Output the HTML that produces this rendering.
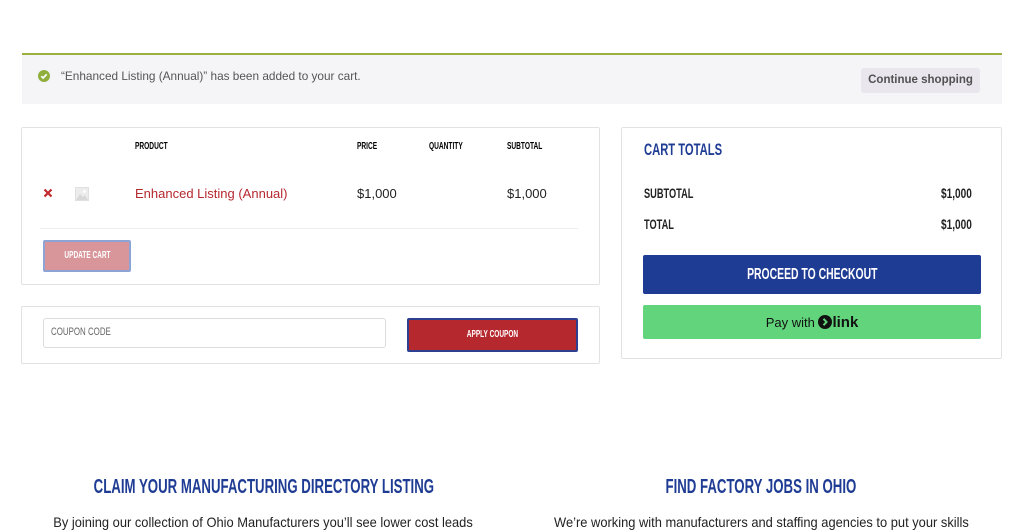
<!DOCTYPE html>
<html><head><meta charset="utf-8"><style>
*{margin:0;padding:0;box-sizing:border-box}
body{width:1024px;height:531px;overflow:hidden;background:#fff;font-family:"Liberation Sans",sans-serif;position:relative}
.a{position:absolute}
.c{display:inline-block;font-weight:bold;transform:scaleX(.66);transform-origin:left center;white-space:nowrap}
.cc{display:inline-block;font-weight:bold;transform:scaleX(.65);transform-origin:center center;white-space:nowrap}
.box{position:absolute;border:1px solid #e2e2e2;border-radius:2px;background:#fff}
</style></head><body>
<div class="a" style="left:22px;top:53px;width:980px;height:51px;background:#f5f5f7;border-top:2px solid #98b13f"></div>
<svg class="a" style="left:38px;top:70px" width="12" height="12" viewBox="0 0 12 12"><circle cx="6" cy="6" r="6" fill="#8fae3b"/><path d="M3.3 6.2l1.8 1.8 3.6-3.7" stroke="#fff" stroke-width="1.7" fill="none"/></svg>
<div class="a" style="left:61px;top:69px;font-size:11.8px;color:#555">“Enhanced Listing (Annual)” has been added to your cart.</div>
<div class="a" style="left:861px;top:68px;width:119px;height:25px;background:#e9e6ed;border-radius:3px;font-size:11.5px;font-weight:bold;color:#515151;text-align:center;line-height:25px">Continue shopping</div>

<div class="box" style="left:21px;top:127px;width:579px;height:158px"></div>
<div class="a" style="left:135px;top:141px;font-size:10px"><span class="c">PRODUCT</span></div>
<div class="a" style="left:357px;top:141px;font-size:10px"><span class="c">PRICE</span></div>
<div class="a" style="left:429px;top:141px;font-size:10px"><span class="c">QUANTITY</span></div>
<div class="a" style="left:507px;top:141px;font-size:10px"><span class="c">SUBTOTAL</span></div>
<svg class="a" style="left:43px;top:188px" width="10" height="10" viewBox="0 0 10 10"><path d="M1.5 1.5l7 7M8.5 1.5l-7 7" stroke="#c0292e" stroke-width="2.2"/></svg>
<div class="a" style="left:75px;top:187px;width:14px;height:14px;background:#ececec;border:1px solid #e0e0e0"></div>
<svg class="a" style="left:76px;top:188px" width="12" height="12" viewBox="0 0 12 12"><circle cx="8.5" cy="3.5" r="1.5" fill="#fff"/><path d="M0 12L4 6l3 3 2-2 3 5z" fill="#d8d8d8"/></svg>
<div class="a" style="left:135px;top:186px;font-size:13px;color:#b5282e">Enhanced Listing (Annual)</div>
<div class="a" style="left:357px;top:186px;font-size:13px;color:#222">$1,000</div>
<div class="a" style="left:507px;top:186px;font-size:13px;color:#222">$1,000</div>
<div class="a" style="left:40px;top:228px;width:538px;height:1px;background:#eee"></div>
<div class="a" style="left:43px;top:240px;width:88px;height:32px;background:#d9969a;border:2px solid #8ea3d6;border-radius:2px;color:#fff;font-size:10px;text-align:center;line-height:28px"><span class="cc">UPDATE CART</span></div>

<div class="box" style="left:21px;top:306px;width:579px;height:58px"></div>
<div class="a" style="left:43px;top:318px;width:343px;height:30px;border:1px solid #ddd;border-radius:3px"></div>
<div class="a" style="left:51px;top:326px;font-size:11px;color:#666"><span class="c" style="font-weight:normal;transform:scaleX(.72)">COUPON CODE</span></div>
<div class="a" style="left:407px;top:318px;width:171px;height:34px;background:#b5282e;border:2px solid #2f3f8f;border-radius:2px;color:#fff;font-size:10px;text-align:center;line-height:30px"><span class="cc">APPLY COUPON</span></div>

<div class="box" style="left:621px;top:127px;width:381px;height:232px"></div>
<div class="a" style="left:644px;top:140px;font-size:17px;color:#1f3c94"><span class="c">CART TOTALS</span></div>
<div class="a" style="left:644px;top:185px;font-size:14px;color:#222"><span class="c">SUBTOTAL</span></div>
<div class="a" style="left:941px;top:185px;font-size:14px;color:#222"><span class="c" style="transform:scaleX(.72)">$1,000</span></div>
<div class="a" style="left:644px;top:216px;font-size:14px;color:#222"><span class="c">TOTAL</span></div>
<div class="a" style="left:941px;top:216px;font-size:14px;color:#222"><span class="c" style="transform:scaleX(.72)">$1,000</span></div>
<div class="a" style="left:643px;top:255px;width:338px;height:39px;background:#1f3c94;border-radius:2px;color:#fff;font-size:16px;text-align:center;line-height:39px"><span class="cc">PROCEED TO CHECKOUT</span></div>
<div class="a" style="left:643px;top:305px;width:338px;height:34px;background:#62d57c;border-radius:2px;color:#111;font-size:13px;text-align:center;line-height:35px">Pay with <svg width="14" height="14" viewBox="0 0 14 14" style="vertical-align:-2px"><circle cx="7" cy="7" r="7" fill="#111"/><path d="M5.5 3.8L8.5 7l-3 3.2" stroke="#62d57c" stroke-width="2" fill="none"/></svg><b style="font-size:15px">link</b></div>

<div class="a" style="left:0;top:475px;width:526px;text-align:center;font-size:20.5px;color:#1f3c94"><span class="cc" style="transform:scaleX(.645)">CLAIM YOUR MANUFACTURING DIRECTORY LISTING</span></div>
<div class="a" style="left:512px;top:475px;width:498px;text-align:center;font-size:20.5px;color:#1f3c94"><span class="cc" style="transform:scaleX(.645)">FIND FACTORY JOBS IN OHIO</span></div>
<div class="a" style="left:0;top:514px;width:526px;text-align:center;font-size:14px;color:#222"><span class="cc" style="font-weight:normal;transform:scaleX(.92)">By joining our collection of Ohio Manufacturers you’ll see lower cost leads</span></div>
<div class="a" style="left:512px;top:514px;width:498px;text-align:center;font-size:14px;color:#222"><span class="cc" style="font-weight:normal;transform:scaleX(.92)">We’re working with manufacturers and staffing agencies to put your skills</span></div>
</body></html>
